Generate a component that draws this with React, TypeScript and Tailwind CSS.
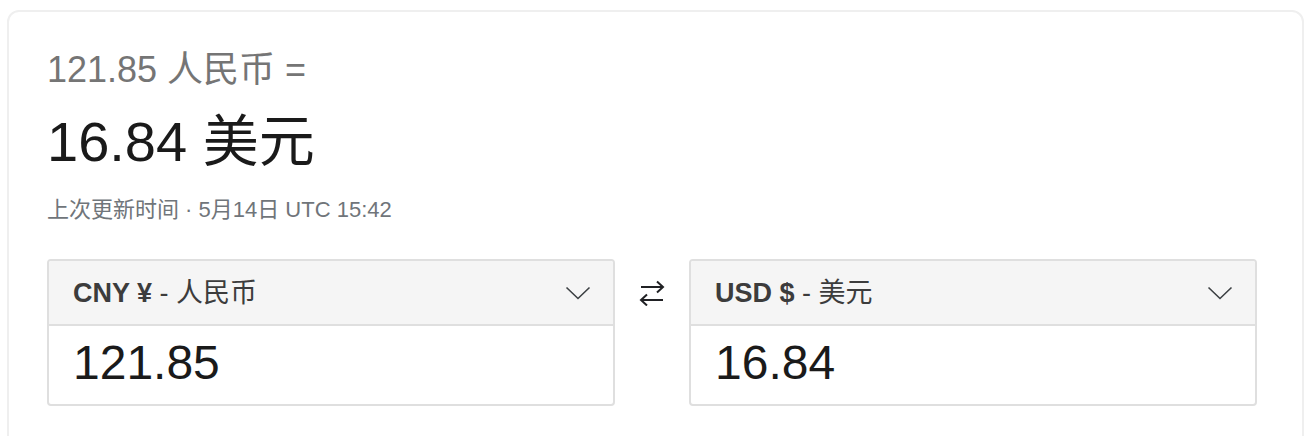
import React from "react";

const FONT = { fontFamily: '"Liberation Sans", Arial, "Noto Sans CJK SC", sans-serif' };

function Chevron() {
  return (
    <svg width="26" height="14" viewBox="0 0 26 14" fill="none">
      <polyline points="1.5,1.5 13,12.5 24.5,1.5" stroke="#3c4043" strokeWidth="1.6" strokeLinejoin="miter" />
    </svg>
  );
}

function SwapIcon() {
  return (
    <svg width="26" height="26" viewBox="0 0 26 26" fill="none" stroke="#202124" strokeWidth="2">
      <line x1="2" y1="7" x2="24" y2="7" />
      <polyline points="18,1.5 24,7 18,12.5" strokeLinejoin="miter" />
      <line x1="2" y1="20" x2="24" y2="20" />
      <polyline points="8,14.5 2,20 8,25.5" strokeLinejoin="miter" />
    </svg>
  );
}

function CurrencyBox({ code, name, value }: { code: string; name: string; value: string }) {
  return (
    <div className="w-[568px] rounded-[4px] border-2 border-[#dfdfdf] overflow-hidden">
      <div className="h-[65px] bg-[#f5f5f5] border-b-2 border-[#dfdfdf] flex items-center justify-between pl-[24px] pr-[22px]">
        <div className="text-[27px] leading-[32px] text-[#3c3c3c]">
          <span className="font-bold">{code}</span>
          <span> - {name}</span>
        </div>
        <Chevron />
      </div>
      <div className="h-[78px] flex items-center pl-[24px] pb-[4px]">
        <span className="text-[48px] leading-[56px] text-[#1a1a1a]">{value}</span>
      </div>
    </div>
  );
}

export default function App() {
  return (
    <div className="w-[1310px] h-[436px] overflow-hidden bg-white pl-[7px] pt-[10px]" style={FONT}>
      <div className="w-[1297px] h-[480px] rounded-[12px] border-2 border-[#efefef] pl-[38px] pt-[36px]">
        <div className="text-[36px] leading-[44px] text-[#757575]">121.85 人民币 =</div>
        <div className="mt-[18px] text-[56px] leading-[64px] text-[#1a1a1a]">16.84 美元</div>
        <div className="mt-[22px] text-[22px] leading-[28px] text-[#70757a]">上次更新时间 · 5月14日 UTC 15:42</div>
        <div className="mt-[35px] flex items-start">
          <CurrencyBox code="CNY ¥" name="人民币" value="121.85" />
          <div className="w-[74px] h-[67px] flex items-center justify-center">
            <SwapIcon />
          </div>
          <CurrencyBox code="USD $" name="美元" value="16.84" />
        </div>
      </div>
    </div>
  );
}
